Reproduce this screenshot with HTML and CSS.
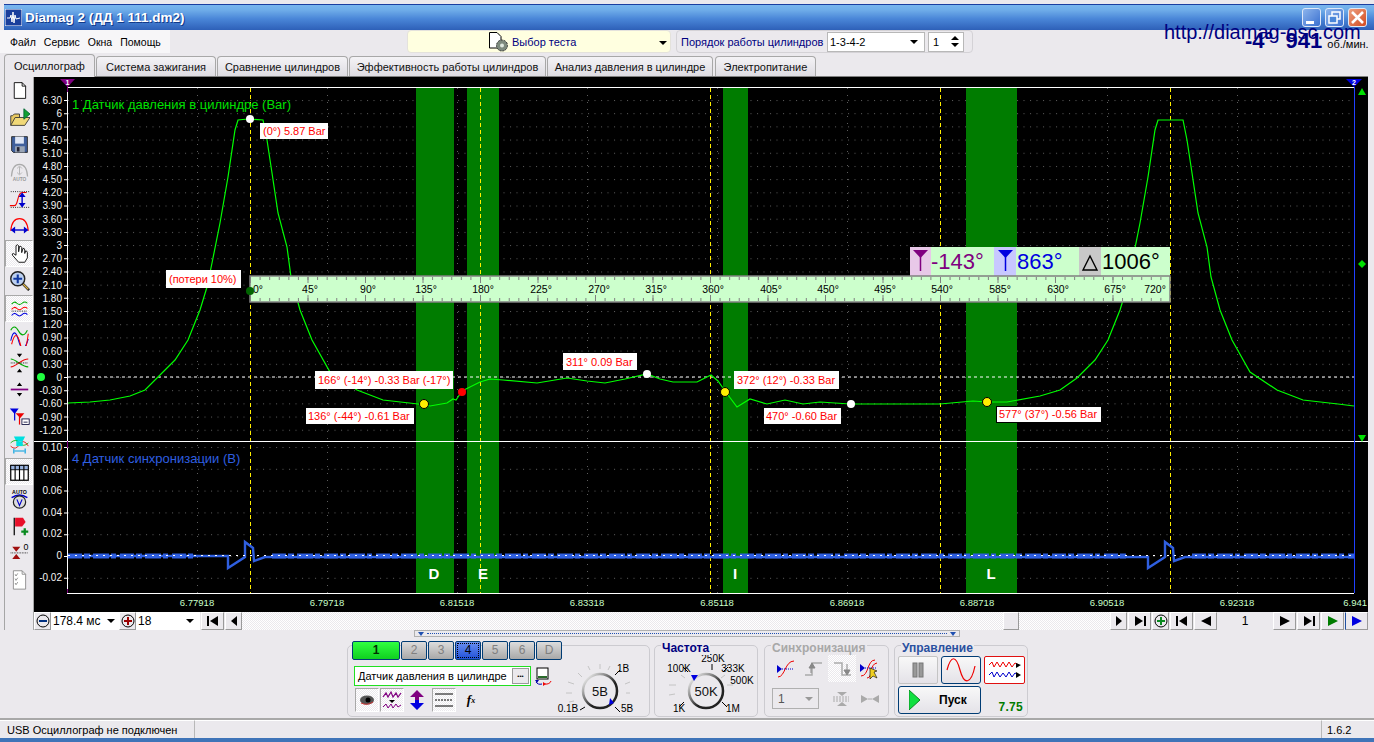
FILE: index.html
```html
<!DOCTYPE html>
<html lang="ru">
<head>
    <meta charset="UTF-8">
    <title>Diamag 2</title>
    <link rel="stylesheet" href="styles.css">
</head>
<body>
<div class="window">

    <!-- Title bar -->
    <div class="titlebar">
        <svg class="app-icon" width="17" height="17" viewBox="0 0 17 17"><rect width="17" height="17" fill="#1a3f9c" stroke="#fff"/><polyline points="2,9 5,9 6,6 7,13 8,3 9,14 10,6 11,10 15,9" fill="none" stroke="#fff"/></svg>
        <span class="app-title">Diamag 2 (ДД 1 111.dm2)</span>
        <div class="win-buttons">
            <div class="win-btn"><svg width="19" height="19" viewBox="0 0 19 19"><rect x="4" y="13" width="8" height="3" fill="#fff"/></svg></div>
            <div class="win-btn"><svg width="19" height="19" viewBox="0 0 19 19"><rect x="7" y="4" width="8" height="7" fill="none" stroke="#fff" stroke-width="1.5"/><rect x="4" y="8" width="8" height="7" fill="#4a86d8" stroke="#fff" stroke-width="1.5"/></svg></div>
            <div class="win-btn win-close"><svg width="19" height="19" viewBox="0 0 19 19"><path d="M4 4 L15 15 M15 4 L4 15" stroke="#fff" stroke-width="2.6"/></svg></div>
        </div>
    </div>

    <!-- Menu + test selector -->
    <div class="menu-row">
        <div class="menu">
            <span>Файл</span><span>Сервис</span><span>Окна</span><span>Помощь</span>
        </div>
        <div class="test-select">
            <svg width="22" height="22" viewBox="0 0 22 22"><path d="M1.5 1.5 H9 L13 5.5 V17 H1.5 Z" fill="#fff" stroke="#000"/><circle cx="14" cy="14.5" r="5.5" fill="#7d8a7d" stroke="#333" stroke-dasharray="2 1"/><circle cx="14" cy="14.5" r="2" fill="#dfe8df"/></svg>
            <span>Выбор теста</span>
            <i class="caret test-caret"></i>
        </div>
        <div class="order-box">
            <span class="order-label">Порядок работы цилиндров</span>
            <div class="order-select">1-3-4-2<i class="caret"></i></div>
            <div class="order-spin">1
                <div class="spin-arrows"><i class="arrow-up"></i><i class="caret"></i></div>
            </div>
        </div>
    </div>

    <div class="site-url">http://diamag-osc.com</div>
    <div class="rpm"><b>-4°&nbsp; 941</b><span>об./мин.</span></div>

    <!-- Tabs -->
    <div class="tabs">
        <div class="tab active">Осциллограф</div>
        <div class="tab t-ign">Система зажигания</div>
        <div class="tab t-cmp">Сравнение цилиндров</div>
        <div class="tab t-eff">Эффективность работы цилиндров</div>
        <div class="tab t-pre">Анализ давления в цилиндре</div>
        <div class="tab t-pow">Электропитание</div>
    </div>

    <div class="workspace">
        <!-- Left tool column -->
        <div class="toolbar">
            <div class="tool"><svg width="24" height="24" viewBox="0 0 24 24"><path d="M6 3 H15 L19 7 V21 H6 Z" fill="#fff" stroke="#000"/><path d="M15 3 V7 H19" fill="none" stroke="#000"/></svg></div>
            <div class="tool"><svg width="24" height="24" viewBox="0 0 24 24"><path d="M2 21 V10 H4 L6 8 H12 V12" fill="#e8c860" stroke="#333"/><path d="M2 21 L7 12 H24 L18 21 Z" fill="#f0d878" stroke="#333"/><path d="M17 2 L24 8 L17 14 Z" fill="#10a030" stroke="#063"/></svg></div>
            <div class="tool"><svg width="24" height="24" viewBox="0 0 24 24"><path d="M3 3 H21 V21 H5 L3 19 Z" fill="#3f5f9c" stroke="#222"/><rect x="7" y="3" width="10" height="8" fill="#dfe6f5"/><rect x="7" y="14" width="11" height="7" fill="#9aa5b5"/><rect x="9" y="15" width="3" height="5" fill="#223"/></svg></div>
            <div class="tool"><svg width="24" height="24" viewBox="0 0 26 24"><path d="M3 17 Q4 2 13 2 Q22 2 23 17" fill="none" stroke="#aaa" stroke-width="1.5"/><path d="M13 5 V14 M10 7 L13 4 L16 7 M10 12 L13 15 L16 12" fill="none" stroke="#aaa"/><text x="13" y="23" class="auto-txt auto-gray">AUTO</text></svg></div>
            <div class="tool"><svg width="24" height="24" viewBox="0 0 24 24"><path d="M1 19 H6 C11 19 9 4 15 4 H20" fill="none" stroke="#f00200" stroke-width="1.3"/><path d="M2 3 H24 M2 21 H24" stroke="#000" stroke-dasharray="1 1.5"/><path d="M15 5 V20" stroke="#00c" stroke-width="1.6"/><path d="M11 9 L15 4 L19 9 Z M11 16 L15 21 L19 16 Z" fill="#00c"/></svg></div>
            <div class="tool"><svg width="24" height="24" viewBox="0 0 24 24"><path d="M2 17 C3 5 8 3 12 3 C16 3 21 5 22 17" fill="none" stroke="#f00" stroke-width="1.3"/><path d="M3 16 H21" stroke="#00c" stroke-width="1.6"/><path d="M7 12 L2 16 L7 20 Z M17 12 L22 16 L17 20 Z" fill="#00c"/></svg></div>
            <div class="tool tool-on"><svg width="24" height="24" viewBox="0 0 24 24"><path d="M11 22 L4 14 Q3 12 5 12 L8 14 V3 Q10 1 11 3 V10 L12 4 Q14 3 14.5 5 V11 L16 6 Q18 6 18 8 V12 L19 9 Q21 9 21 11 V17 L18 22 Z" fill="#fff" stroke="#000"/></svg></div>
            <div class="tool"><svg width="24" height="24" viewBox="0 0 24 24"><path d="M15 15 L23 23" stroke="#222" stroke-width="3"/><path d="M16 16 L22 22" stroke="#d8b040" stroke-width="1.4"/><circle cx="10" cy="10" r="8" fill="#bcd0f0" stroke="#222" stroke-width="1.6"/><path d="M10 5 V15 M5 10 H15" stroke="#1038a0" stroke-width="2.4"/></svg></div>
            <div class="tool tool-on"><svg width="24" height="24" viewBox="0 0 24 24"><path d="M3 7 Q6 3 9 6 T15 6 T21 6" fill="none" stroke="#0a0" stroke-width="1.2"/><path d="M3 13 Q6 9 9 12 T15 12 T21 12" fill="none" stroke="#f00" stroke-width="1.2"/><path d="M3 20 Q6 16 9 19 T15 19 T21 19" fill="none" stroke="#00d" stroke-width="1.2"/><path d="M3 15 H21" stroke="#000" stroke-dasharray="1 1"/></svg></div>
            <div class="tool"><svg width="24" height="24" viewBox="0 0 24 24"><path d="M2 6 Q6 -2 11 7 T21 6" fill="none" stroke="#0a0" stroke-width="1.2"/><path d="M2 18 Q6 0 11 18 T22 16" fill="none" stroke="#00d" stroke-width="1.2"/><path d="M3 22 Q8 2 13 22 T22 10" fill="none" stroke="#f00" stroke-width="1.2"/></svg></div>
            <div class="tool"><svg width="24" height="24" viewBox="0 0 24 24"><path d="M2 8 C8 8 14 17 22 17" fill="none" stroke="#0a0" stroke-width="1.2"/><path d="M2 17 C8 17 14 8 22 8" fill="none" stroke="#e00" stroke-width="1.2"/><path d="M2 12.5 H22" stroke="#000" stroke-dasharray="1 1"/><path d="M9 2 H15 L12 6 Z M9 23 H15 L12 19 Z" fill="#000"/></svg></div>
            <div class="tool"><svg width="24" height="24" viewBox="0 0 24 24"><path d="M2 12 H22" stroke="#800080" stroke-width="2"/><path d="M9 8 L12 4 L15 8 Z M9 16 L12 20 L15 16 Z" fill="#000"/></svg></div>
            <div class="tool"><svg width="24" height="24" viewBox="0 0 26 24"><path d="M1 2 H12 L7 9 Z" fill="#00d"/><path d="M7 3 V17" stroke="#00d" stroke-width="1.5"/><path d="M8 8 H19 L14 14 Z" fill="#e00"/><path d="M13 9 V22" stroke="#e00" stroke-width="1.5"/><rect x="16" y="15" width="9" height="7" fill="#fff" stroke="#003"/><path d="M18 19 H23" stroke="#003"/></svg></div>
            <div class="tool"><svg width="24" height="24" viewBox="0 0 26 24"><path d="M6 2 H20 L17 8 H9 Z" fill="#00e0e0"/><path d="M2 10 Q8 4 13 10 T24 10" fill="none" stroke="#0a0"/><path d="M2 14 Q8 20 13 12 T24 14" fill="none" stroke="#e00"/><rect x="9" y="8" width="8" height="6" fill="#00e0e0"/><path d="M6 17 V23 M20 17 V23 M7 20 H19" stroke="#00a0e0" stroke-width="1.4"/></svg></div>
            <div class="tool tool-on"><svg width="24" height="24" viewBox="0 0 24 24"><rect x="2" y="5" width="20" height="17" fill="#fff" stroke="#000" stroke-width="1.4"/><rect x="2" y="5" width="20" height="5" fill="#9ab4e0" stroke="#000"/><path d="M7 5 V22 M12 5 V22 M17 5 V22" stroke="#000" stroke-width="1.3"/></svg></div>
            <div class="tool"><svg width="24" height="24" viewBox="0 0 24 24"><text x="12" y="7" class="auto-txt">AUTO</text><path d="M3 11 Q12 5 21 11" fill="none" stroke="#00c" stroke-width="1.5"/><circle cx="12" cy="16" r="7" fill="#ddd" stroke="#222" stroke-width="1.4"/><path d="M9 13 L12 20 L15 13" fill="none" stroke="#00c" stroke-width="1.3"/></svg></div>
            <div class="tool"><svg width="24" height="24" viewBox="0 0 24 24"><path d="M6 3 V23" stroke="#000" stroke-width="1.4"/><path d="M7 3 L16 3 L19 8 L15 13 L7 13 Z" fill="#e8102a"/><path d="M14 19 H22 M18 15 V23" stroke="#0a8a20" stroke-width="2.6"/></svg></div>
            <div class="tool"><svg width="24" height="24" viewBox="0 0 26 24"><path d="M4 5 H14 L9 11 Z M4 20 H14 L9 14 Z" fill="#a01010"/><path d="M2 12.5 H24" stroke="#000" stroke-dasharray="1 1"/><text x="21" y="9" class="zero-txt">0</text></svg></div>
            <div class="tool"><svg width="24" height="24" viewBox="0 0 24 24"><path d="M5 2 H15 L19 6 V23 H5 Z" fill="#fff" stroke="#888"/><path d="M7 6 L8 8 L10 5 M7 11 L8 13 L10 10 M7 16 L8 18 L10 15" fill="none" stroke="#888"/><path d="M15 2 V6 H19" fill="none" stroke="#888"/></svg></div>
        </div>

        <div class="scope-col">
            <!-- Scope canvas, coordinates are screen pixels -->
            <svg class="scope" width="1334" height="535" viewBox="34 77 1334 535">
                <defs>
                    <pattern id="dots-top" x="68" y="100" width="6.5" height="13.19" patternUnits="userSpaceOnUse"><rect width="1" height="1" fill="#5c5c5c"/></pattern>
                    <pattern id="dots-bot" x="68" y="447" width="6.5" height="21.8" patternUnits="userSpaceOnUse"><rect width="1" height="1" fill="#5c5c5c"/></pattern>
                </defs>

                <!-- grid -->
                <rect x="68" y="99" width="1286" height="340" fill="url(#dots-top)"/>
                <rect x="68" y="446" width="1286" height="146" fill="url(#dots-bot)"/>
                <path class="vgrid" d="M197.5 88V593M327.5 88V593M457.5 88V593M587.5 88V593M717.5 88V593M847.5 88V593M977.5 88V593M1107.5 88V593M1237.5 88V593"/>

                <!-- cylinder phase bands -->
                <rect x="416" y="88" width="38" height="505" fill="#007c00"/>
                <rect x="467" y="88" width="32" height="505" fill="#007c00"/>
                <rect x="723" y="88" width="25" height="505" fill="#007c00"/>
                <rect x="966" y="88" width="51" height="505" fill="#007c00"/>

                <line class="zero" x1="68" y1="377" x2="1354" y2="377"/>

                <!-- TDC markers -->
                <path class="tdc" d="M250.5 88V593M480.5 88V593M710.5 88V593M940.5 88V593M1170.5 88V593"/>

                <!-- frame -->
                <path class="frame" d="M67 87.5H1354M34 441.5H1368M67 593.5H1354M67.5 87V593"/>
                <line x1="65.5" y1="100" x2="65.5" y2="431" class="ytick"/>
                <line x1="65.5" y1="447" x2="65.5" y2="580" class="ytick-low"/>
                <line x1="1354.5" y1="87" x2="1354.5" y2="593" stroke="#2040ff"/>
                <path d="M67.5 80V92M67.5 441V448M67.5 589V593" stroke="#800080"/>
                <path d="M60 79H75L67.5 87Z" fill="#800080"/>
                <text x="67.5" y="85" class="mark-no">1</text>
                <path d="M1346 79H1362L1354 87Z" fill="#0000e0"/>
                <text x="1354" y="85" class="mark-no">2</text>
                <path d="M1358 95L1362 88L1366 95Z" fill="#00e000"/>
                <path d="M1362 260L1366 264L1362 268L1358 264Z" fill="#00e000"/>
                <path d="M1358 435L1362 442L1366 435Z" fill="#00e000"/>
                <circle cx="41" cy="377" r="4" fill="#20ff40"/>

                <!-- axis labels -->
                <g class="ylabels">
                    <text x="62" y="104">6.30</text><text x="62" y="117">6</text><text x="62" y="130">5.70</text>
                    <text x="62" y="144">5.40</text><text x="62" y="157">5.10</text><text x="62" y="170">4.80</text>
                    <text x="62" y="183">4.50</text><text x="62" y="196">4.20</text><text x="62" y="209">3.90</text>
                    <text x="62" y="223">3.60</text><text x="62" y="236">3.30</text><text x="62" y="249">3</text>
                    <text x="62" y="262">2.70</text><text x="62" y="275">2.40</text><text x="62" y="289">2.10</text>
                    <text x="62" y="302">1.80</text><text x="62" y="315">1.50</text><text x="62" y="328">1.20</text>
                    <text x="62" y="341">0.90</text><text x="62" y="355">0.60</text><text x="62" y="368">0.30</text>
                    <text x="62" y="381">0</text><text x="62" y="394">-0.30</text><text x="62" y="407">-0.60</text>
                    <text x="62" y="421">-0.90</text><text x="62" y="434">-1.20</text>
                    <text x="62" y="451">0.10</text><text x="62" y="473">0.08</text><text x="62" y="494">0.06</text>
                    <text x="62" y="516">0.04</text><text x="62" y="537">0.02</text><text x="62" y="559">0</text>
                    <text x="62" y="581">-0.02</text>
                </g>
                <g class="xlabels">
                    <text x="197" y="606">6.77918</text><text x="327" y="606">6.79718</text><text x="457" y="606">6.81518</text>
                    <text x="587" y="606">6.83318</text><text x="717" y="606">6.85118</text><text x="847" y="606">6.86918</text>
                    <text x="977" y="606">6.88718</text><text x="1107" y="606">6.90518</text><text x="1237" y="606">6.92318</text>
                    <text x="1367" y="606" class="x-last">6.941</text>
                </g>
                <text x="72" y="109" class="ch-name ch-green">1 Датчик давления в цилиндре (Bar)</text>
                <text x="72" y="463" class="ch-name ch-blue">4 Датчик синхронизации (В)</text>

                <g class="band-names">
                    <text x="434" y="579">D</text><text x="483" y="579">E</text><text x="735" y="579">I</text><text x="991" y="579">L</text>
                </g>

                <!-- sync signal -->
                <path class="sync" d="M68 556H228V568L245 557V542L253 548L254 561L265 557H1148V568L1165 557V542L1173 548L1174 561L1185 557H1354"/>
                <path class="sync-noise" d="M68 556H193M272 556H1128M1192 556H1354"/>
                <line class="zero zero-sync" x1="68" y1="555.5" x2="1354" y2="555.5"/>

                <!-- pressure trace -->
                <polyline class="trace" points="68,403 90,402 110,400 130,396 145,390 158,377 175,360 188,340 200,310 207,287 212,263 220,223 228,177 235,130 238,120 248,119 263,120 267,140 272,173 278,213 287,247 291,277 300,310 312,340 330,372 357,390 383,400 418,404 430,406 447,403 453,399 456,400 462,391 468,388 480,382 490,379 503,380 537,383 567,378 587,381 605,383 625,379 647,374 660,379 673,382 697,382 711,375 718,381 725,391 737,407 750,399 767,404 785,400 803,404 820,402 850,404 940,404 973,401 987,402 1007,402 1040,396 1060,390 1077,378 1095,360 1108,340 1120,310 1127,287 1132,263 1140,223 1148,177 1155,130 1158,120 1180,120 1183,120 1187,140 1192,173 1198,213 1207,247 1211,277 1220,310 1232,340 1250,372 1277,390 1303,400 1338,404 1354,406"/>

                <!-- angle ruler -->
                <rect x="910" y="247" width="260" height="29" fill="#ccffcc"/>
                <rect x="910" y="247" width="21" height="29" fill="#e8c8e8"/>
                <rect x="994" y="247" width="22" height="29" fill="#c8c8ff"/>
                <rect x="1079" y="247" width="22" height="29" fill="#c8c8c8"/>
                <path d="M913 250H928L920.5 258Z" fill="#800080"/><path d="M920.5 252V271" stroke="#800080" stroke-width="1.5"/>
                <path d="M998 250H1013L1005.5 258Z" fill="#0000e0"/><path d="M1005.5 252V271" stroke="#0000e0" stroke-width="1.5"/>
                <path d="M1083 270H1097L1090 256Z" fill="none" stroke="#000" stroke-width="1.4"/>
                <text x="931" y="269" class="delta delta-a">-143°</text>
                <text x="1017" y="269" class="delta delta-b">863°</text>
                <text x="1102" y="269" class="delta">1006°</text>
                <rect x="250" y="276" width="920" height="26" fill="#ccffcc" stroke="#808080" stroke-width="1.5"/>
                <path class="rule-minor" d="M250 278.5H1170M250 299.5H1170"/>
                <path class="rule-major" d="M250 280H1170M250 298H1170"/>
                <g class="rule-labels">
                    <text x="258" y="293">0°</text><text x="310" y="293">45°</text><text x="368" y="293">90°</text>
                    <text x="426" y="293">135°</text><text x="483" y="293">180°</text><text x="541" y="293">225°</text>
                    <text x="599" y="293">270°</text><text x="656" y="293">315°</text><text x="713" y="293">360°</text>
                    <text x="771" y="293">405°</text><text x="828" y="293">450°</text><text x="885" y="293">495°</text>
                    <text x="942" y="293">540°</text><text x="1000" y="293">585°</text><text x="1058" y="293">630°</text>
                    <text x="1115" y="293">675°</text><text x="1155" y="293">720°</text>
                </g>

                <!-- measurement points -->
                <circle cx="250" cy="119" r="4" fill="#fff"/>
                <circle cx="250" cy="291" r="4" fill="#006400"/>
                <circle cx="424" cy="404" r="4.5" fill="#ffee00" stroke="#000"/>
                <circle cx="462" cy="392" r="4" fill="#f00"/>
                <circle cx="647" cy="374" r="4" fill="#fff"/>
                <circle cx="725" cy="392" r="4.5" fill="#ffee00" stroke="#000"/>
                <circle cx="851" cy="404" r="4" fill="#fff"/>
                <circle cx="987" cy="402" r="4.5" fill="#ffee00" stroke="#000"/>

                <!-- callouts -->
                <g class="callouts">
                    <rect x="260" y="123" width="68" height="16"/><text x="263" y="135">(0°) 5.87 Bar</text>
                    <rect x="166" y="270" width="75" height="18"/><text x="169" y="283">(потери 10%)</text>
                    <rect x="315" y="371" width="138" height="18"/><text x="318" y="384">166° (-14°) -0.33 Bar (-17°)</text>
                    <rect x="306" y="408" width="108" height="16"/><text x="308" y="420">136° (-44°) -0.61 Bar</text>
                    <rect x="563" y="353" width="74" height="17"/><text x="566" y="366">311° 0.09 Bar</text>
                    <rect x="734" y="371" width="105" height="18"/><text x="737" y="384">372° (12°) -0.33 Bar</text>
                    <rect x="764" y="408" width="77" height="16"/><text x="766" y="420">470° -0.60 Bar</text>
                    <rect x="996.5" y="406.5" width="105" height="16" stroke="#000"/><text x="999" y="418">577° (37°) -0.56 Bar</text>
                </g>
            </svg>

            <!-- Time scale row -->
            <div class="scale-row">
                <div class="nav-btn btn-round"><svg width="14" height="14" viewBox="0 0 14 14"><circle cx="7" cy="7" r="6" fill="none" stroke="#000"/><path d="M3 7H11" stroke="#003080" stroke-width="2"/></svg></div>
                <div class="scale-box box-time">178.4 мс<i class="caret"></i></div>
                <div class="nav-btn btn-round"><svg width="14" height="14" viewBox="0 0 14 14"><circle cx="7" cy="7" r="6" fill="none" stroke="#000"/><path d="M3 7H11M7 3V11" stroke="#900" stroke-width="2"/></svg></div>
                <div class="scale-box box-num">18<i class="caret"></i></div>
                <div class="nav-btn btn-wide"><svg width="12" height="10" viewBox="0 0 12 10"><path d="M1 0V10" stroke="#000" stroke-width="2"/><path d="M11 0V10L3 5Z"/></svg></div>
                <div class="nav-btn"><svg width="6" height="10" viewBox="0 0 6 10"><path d="M6 0V10L0 5Z"/></svg></div>
                <div class="track"><div class="thumb"></div></div>
                <div class="nav-btn"><svg width="6" height="10" viewBox="0 0 6 10"><path d="M0 0V10L6 5Z"/></svg></div>
                <div class="nav-btn btn-wide"><svg width="12" height="10" viewBox="0 0 12 10"><path d="M1 0V10L9 5Z"/><path d="M11 0V10" stroke="#000" stroke-width="2"/></svg></div>
                <div class="nav-btn btn-round"><svg width="14" height="14" viewBox="0 0 14 14"><circle cx="7" cy="7" r="6" fill="none" stroke="#000"/><path d="M3 7H11M7 3V11" stroke="#0a8a20" stroke-width="2"/></svg></div>
                <div class="nav-btn btn-wide"><svg width="12" height="10" viewBox="0 0 12 10"><path d="M1 0V10" stroke="#000" stroke-width="2"/><path d="M11 0V10L3 5Z"/></svg></div>
                <div class="nav-btn btn-wide"><svg width="10" height="10" viewBox="0 0 10 10"><path d="M10 0V10L0 5Z"/></svg></div>
                <div class="frame-no">1</div>
                <div class="nav-btn btn-wide"><svg width="10" height="10" viewBox="0 0 10 10"><path d="M0 0V10L10 5Z"/></svg></div>
                <div class="nav-btn btn-wide"><svg width="12" height="10" viewBox="0 0 12 10"><path d="M1 0V10L9 5Z"/><path d="M11 0V10" stroke="#000" stroke-width="2"/></svg></div>
                <div class="nav-btn btn-wide"><svg width="10" height="10" viewBox="0 0 10 10"><path d="M0 0V10L10 5Z" fill="#007c00"/></svg></div>
                <div class="nav-btn btn-wide btn-last"><svg width="10" height="10" viewBox="0 0 10 10"><path d="M0 0V10L10 5Z" fill="#0000e0"/></svg></div>
            </div>
        </div>
    </div>

    <!-- Range slider -->
    <div class="range-bar"><i class="range-l"></i><div class="range-dots"></div><i class="range-r"></i></div>

    <!-- Control panels -->
    <div class="panels">
        <div class="panel panel-ch">
            <div class="channels">
                <div class="ch ch-1">1</div><div class="ch">2</div><div class="ch">3</div><div class="ch ch-4">4</div><div class="ch">5</div><div class="ch">6</div><div class="ch">D</div>
            </div>
            <div class="ch-body">
                <div class="ch-left">
                    <div class="ch-top">
                        <div class="ch-input">Датчик давления в цилиндре<span class="dots-btn">•••</span></div>
                        <svg width="18" height="19" viewBox="0 0 18 19"><rect x="2" y="1" width="11" height="11" fill="#fff" stroke="#000"/><rect x="3" y="9" width="9" height="2" fill="#2a6a2a"/><path d="M1 15 A5 4 0 0 0 7 17" fill="none" stroke="#00a"/><path d="M16 14 A5 4 0 0 1 10 17" fill="none" stroke="#e00"/><path d="M0 13H4L2 16Z" fill="#00a"/><path d="M8 15V19L11 17Z" fill="#e00"/></svg>
                    </div>
                    <div class="ch-tools">
                        <div class="ch-tool tool-on"><svg width="16" height="12" viewBox="0 0 16 12"><ellipse cx="8" cy="6" rx="7" ry="4.5" fill="#555"/><circle cx="9" cy="6" r="2.5" fill="#000"/><path d="M2 9Q8 12 14 8" fill="none" stroke="#c33"/></svg></div>
                        <div class="ch-tool tool-on"><svg width="20" height="20" viewBox="0 0 20 20"><path d="M1 7L4 3L6 7L9 2L11 7L14 3L16 7L19 3" fill="none" stroke="#800080" stroke-width="1.2"/><path d="M7 10H13L10 13Z"/><path d="M1 17L4 14L6 18L9 14L11 18L14 14L16 17L19 15" fill="none" stroke="#800080"/></svg></div>
                        <div class="ch-tool ch-plain"><svg width="16" height="22" viewBox="0 0 16 22"><path d="M8 1L15 8H10V11H6V8H1Z" fill="#800080"/><path d="M8 21L15 14H10V11H6V14H1Z" fill="#0000e0"/></svg></div>
                        <div class="ch-tool tool-on"><svg width="20" height="18" viewBox="0 0 20 18"><path d="M1 3H19M1 15H19" stroke="#000"/><path d="M1 9H19" stroke="#000" stroke-dasharray="2 1"/></svg></div>
                        <div class="ch-tool ch-plain ch-fx"><i>f</i><sub>x</sub></div>
                    </div>
                </div>
                <svg class="knob knob-volt" width="80" height="58" viewBox="0 0 80 58">
                    <path class="knob-ticks" d="M40 4V9M28 6L30 10M50 6L48 10M18 13L22 17M8 22L14 24M6 33H12M9 42L14 41M70 33H66M70 22L65 24"/>
                    <circle cx="40" cy="31" r="17" fill="#ebe9ed" stroke="url(#knob-ring)" stroke-width="2.5"/>
                    <text x="40" y="36" class="knob-val">5В</text>
                    <path d="M55 15L60 10M55 47L60 52M25 47L20 50" stroke="#000"/>
                    <path d="M54 43L50 38L49 45Z" fill="#0000e0"/>
                    <text x="63" y="12" class="knob-lbl">1В</text>
                    <text x="8" y="52" class="knob-lbl">0.1В</text>
                    <text x="67" y="52" class="knob-lbl">5В</text>
                    <defs><linearGradient id="knob-ring" x1="0" y1="0" x2="1" y2="1"><stop offset="0.1" stop-color="#e8e8e8"/><stop offset="0.6" stop-color="#222"/></linearGradient></defs>
                </svg>
            </div>
        </div>

        <div class="panel panel-freq">
            <div class="panel-title">Частота</div>
            <svg class="knob" width="104" height="68" viewBox="0 0 104 68">
                <path class="knob-ticks" d="M26 25L30 28M14 35H21M14 45L20 44M72 35H78M70 25L66 28"/>
                <path d="M28 17L33 22M57 14V20M73 17L68 22M29 52L24 57M67 52L72 57" stroke="#000"/>
                <circle cx="51" cy="41" r="17" fill="#ebe9ed" stroke="url(#knob-ring)" stroke-width="2.5"/>
                <text x="51" y="46" class="knob-val">50K</text>
                <path d="M36 25L43 25L39 31Z" fill="#0000e0"/>
                <text x="58" y="12" class="knob-lbl">250K</text>
                <text x="24" y="22" class="knob-lbl">100K</text>
                <text x="78" y="22" class="knob-lbl">333K</text>
                <text x="87" y="34" class="knob-lbl">500K</text>
                <text x="24" y="62" class="knob-lbl">1K</text>
                <text x="78" y="62" class="knob-lbl">1M</text>
            </svg>
        </div>

        <div class="panel panel-sync">
            <div class="panel-title title-off">Синхронизация</div>
            <div class="sync-grid">
                <div class="sync-cell"><svg width="20" height="20" viewBox="0 0 20 20"><path d="M2 18C9 18 9 2 18 2" fill="none" stroke="#e00"/><path d="M2 10H18" stroke="#00c" stroke-dasharray="1 1"/><path d="M1 6V14L6 10Z" fill="#00c"/></svg></div>
                <div class="sync-cell"><svg width="20" height="20" viewBox="0 0 20 20"><path d="M1 16H8V4H18" fill="none" stroke="#aaa" stroke-width="1.5"/><path d="M5 9H11L8 4ZM7 9V14" fill="#888" stroke="#888"/></svg></div>
                <div class="sync-cell tool-on"><svg width="20" height="20" viewBox="0 0 20 20"><path d="M2 4H10V16H19" fill="none" stroke="#aaa" stroke-width="1.5"/><path d="M12 11H18L15 16ZM15 5V12" fill="#888" stroke="#888"/></svg></div>
                <div class="sync-cell"><svg width="22" height="22" viewBox="0 0 22 22"><path d="M2 18C10 18 8 2 16 2" fill="none" stroke="#e00"/><path d="M8 20C14 20 10 6 18 5" fill="none" stroke="#e00"/><path d="M2 10H18" stroke="#00c" stroke-dasharray="1 1"/><path d="M1 6V14L6 10Z" fill="#00c"/><path d="M11 10L11 21L14 18L18 20L15 14L18 13Z" fill="#f0d020" stroke="#000" stroke-width="0.6"/></svg></div>
                <div class="sync-select">1<i class="caret caret-off"></i></div>
                <div class="sync-cell"><svg width="20" height="20" viewBox="0 0 20 20"><path d="M5 3H15L10 7ZM5 17H15L10 13Z" fill="#aaa"/><path d="M1 8H17M1 10H17M1 12H17" stroke="#aaa" stroke-dasharray="2 1"/></svg></div>
                <div class="sync-cell"><svg width="20" height="20" viewBox="0 0 20 20"><path d="M1 6V14L8 10ZM19 6V14L12 10Z" fill="#aaa"/><path d="M8 10H12" stroke="#aaa"/></svg></div>
            </div>
        </div>

        <div class="panel panel-ctrl">
            <div class="panel-title title-ctrl">Управление</div>
            <div class="ctrl-grid">
                <div class="ctrl-btn btn-pause"><svg width="14" height="16" viewBox="0 0 14 16"><rect x="2" y="1" width="4" height="14" fill="#999" stroke="#777"/><rect x="8" y="1" width="4" height="14" fill="#999" stroke="#777"/></svg></div>
                <div class="ctrl-btn btn-sine"><svg width="32" height="24" viewBox="0 0 32 24"><path d="M2 12C6 -3 11 -3 15 12S26 27 30 8" fill="none" stroke="#e00" stroke-width="1.2"/></svg></div>
                <div class="ctrl-btn btn-multi"><svg width="34" height="22" viewBox="0 0 34 22"><path d="M1 6L4 3L6 8L9 3L12 8L15 3L18 8L21 3L24 8L27 4L31 6" fill="none" stroke="#e00"/><path d="M28 4V9L33 6Z" fill="#000"/><path d="M1 16L4 13L6 18L9 13L12 18L15 14L18 18L21 13L24 18L27 14L31 16" fill="none" stroke="#00c"/><path d="M28 13V19L33 16Z" fill="#000"/></svg></div>
                <div class="ctrl-btn btn-start"><svg width="11" height="20" viewBox="0 0 11 20"><path d="M0 0V20L11 10Z" fill="#10e040" stroke="#0a8a20"/></svg><span>Пуск</span></div>
                <div class="speed">7.75</div>
            </div>
        </div>
    </div>

    <!-- Status bar -->
    <div class="statusbar">
        <div class="st-cell st-main">USB Осциллограф не подключен</div>
        <div class="st-cell st-mid"></div>
        <div class="st-cell st-ver">1.6.2</div>
    </div>
</div>
</body>
</html>
```
FILE: styles.css
```css
/* Basic Reset */
* {
    margin: 0;
    padding: 0;
    box-sizing: border-box;
}
html, body {
    width: 1374px;
    height: 742px;
    overflow: hidden;
}
body {
    font-family: 'Liberation Sans', Arial, sans-serif;
    font-size: 11px;
    background-color: #fff;
    color: #000;
}
.window {
    position: relative;
    width: 1374px;
    height: 742px;
    background-color: #ebe9ed;
    padding-top: 4px;
    border-bottom: 4px solid #3f74b8;
}

/* Title bar */
.titlebar {
    height: 26px;
    margin-left: 4px;
    display: flex;
    align-items: center;
    padding-left: 1px;
    border-top: 1px solid #1b3fa0;
    background: linear-gradient(#79b6ee 0, #6fade9 20%, #4a86d8 55%, #2e60b8 100%);
}
.app-icon {
    margin-right: 3px;
}
.app-title {
    color: #fff;
    font-size: 13.5px;
    font-weight: bold;
    text-shadow: 1px 1px 0 #123a8a;
}
.win-buttons {
    margin-left: auto;
    margin-right: 7px;
    display: flex;
    gap: 4px;
}
.win-btn {
    width: 19px;
    height: 19px;
    border: 1px solid #dfe8f8;
    border-radius: 3px;
    background: linear-gradient(135deg, #8cb4ec, #3a70d0);
    overflow: hidden;
}
.win-btn svg {
    display: block;
    margin: -1px;
}
.win-close {
    background: linear-gradient(135deg, #eea080, #d24a20);
}

/* Menu row */
.menu-row {
    height: 23px;
    display: flex;
    align-items: stretch;
}
.menu {
    width: 170px;
    background-color: #f7f6f8;
    display: flex;
    align-items: center;
    padding-left: 10px;
    gap: 8px;
    font-size: 10.5px;
}
.test-select {
    position: relative;
    width: 264px;
    margin-left: 237px;
    background-color: #ffffe0;
    border: 1px solid #e4e2dc;
    border-radius: 4px;
    display: flex;
    align-items: center;
    padding-left: 80px;
    color: #000080;
}
.test-select span {
    margin-left: 2px;
}
.test-caret {
    position: absolute;
    right: 3px;
    top: 10px;
}
.caret {
    display: inline-block;
    border-left: 4px solid transparent;
    border-right: 4px solid transparent;
    border-top: 4px solid #000;
}
.arrow-up {
    display: inline-block;
    border-left: 4px solid transparent;
    border-right: 4px solid transparent;
    border-bottom: 4px solid #000;
}
.order-box {
    width: 297px;
    margin-left: 5px;
    border: 1px solid #d4d2d6;
    border-radius: 4px;
    display: flex;
    align-items: center;
    padding-left: 4px;
}
.order-label {
    color: #000080;
    width: 146px;
    font-size: 11px;
}
.order-select {
    width: 98px;
    height: 20px;
    background-color: #fff;
    border: 1px solid #b8b8b8;
    display: flex;
    align-items: center;
    justify-content: space-between;
    padding: 0 6px 0 2px;
}
.order-spin {
    width: 36px;
    height: 20px;
    margin-left: 3px;
    background-color: #fff;
    border: 1px solid #b8b8b8;
    display: flex;
    align-items: center;
    justify-content: space-between;
    padding: 0 4px;
}
.spin-arrows {
    display: flex;
    flex-direction: column;
    gap: 3px;
}

/* Overlapping text top right */
.site-url {
    position: absolute;
    left: 1164px;
    top: 21px;
    color: #000080;
    font-size: 20px;
    line-height: 23px;
    white-space: nowrap;
}
.rpm {
    position: absolute;
    left: 1245px;
    top: 29px;
    display: flex;
    align-items: flex-end;
    color: #000080;
    white-space: nowrap;
}
.rpm b {
    font-size: 22px;
    line-height: 24px;
}
.rpm span {
    color: #000;
    font-size: 11px;
    line-height: 17px;
    margin-left: 5px;
}

/* Tabs */
.tabs {
    height: 23px;
    display: flex;
    align-items: flex-end;
    padding-left: 4px;
    gap: 1px;
}
.tab {
    height: 20px;
    display: flex;
    align-items: center;
    justify-content: center;
    border: 1px solid #a8a8a8;
    border-bottom: 0;
    border-radius: 4px 4px 0 0;
    background: linear-gradient(#f4f3f6, #dedce2);
    font-size: 11px;
    color: #111;
    width: 120px;
}
.tab.active {
    width: 91px;
    height: 23px;
    background: #ebe9ed;
    margin-bottom: -1px;
    position: relative;
}
.t-cmp { width: 131px; }
.t-eff { width: 197px; }
.t-pre { width: 166px; }
.t-pow { width: 101px; margin-left: 1px; }

/* Workspace */
.workspace {
    height: 554px;
    display: flex;
    padding-left: 4px;
}
.toolbar {
    width: 30px;
    border-left: 1px solid #a6a6a6;
    border-right: 1px solid #a6a6a6;
    display: flex;
    flex-direction: column;
    padding-top: 1px;
}
.tool {
    height: 27.2px;
    width: 28px;
    display: flex;
    align-items: center;
    justify-content: center;
}
.tool svg {
    width: 21px;
    height: 21px;
}
.tool-on {
    background: repeating-conic-gradient(#fff 0 25%, #ebe9ed 0 50%) 0 0 / 2px 2px;
    border: 1px solid;
    border-color: #a8a8a8 #fff #fff #a8a8a8;
}
.auto-txt {
    font-size: 6px;
    font-weight: bold;
    text-anchor: middle;
    fill: #000;
}
.auto-gray {
    fill: #999;
}
.zero-txt {
    font-size: 11px;
    text-anchor: middle;
    fill: #000;
}
.scope-col {
    width: 1334px;
    display: flex;
    flex-direction: column;
    border-top: 1px solid #808080;
}
.scope {
    display: block;
    background-color: #000;
}

/* Scope drawing */
.vgrid {
    stroke: #5c5c5c;
    stroke-dasharray: 1 6;
    fill: none;
}
.zero {
    stroke: #fff;
    stroke-dasharray: 3 3;
}
.zero-sync {
    stroke-dasharray: 2 5;
}
.tdc {
    stroke: #ffee00;
    stroke-dasharray: 4 3;
    fill: none;
}
.frame {
    stroke: #fff;
    fill: none;
}
.ytick {
    stroke: #fff;
    stroke-width: 3;
    stroke-dasharray: 1 12.19;
}
.ytick-low {
    stroke: #fff;
    stroke-width: 3;
    stroke-dasharray: 1 20.8;
}
.mark-no {
    fill: #fff;
    font-size: 7px;
    font-weight: bold;
    text-anchor: middle;
}
.ylabels text {
    fill: #f4f4f4;
    font-size: 10px;
    text-anchor: end;
}
.xlabels text {
    fill: #c8ffc8;
    font-size: 9.5px;
    text-anchor: middle;
}
.xlabels .x-last {
    text-anchor: end;
}
.ch-name {
    font-size: 13px;
}
.ch-green { fill: #00e000; }
.ch-blue { fill: #2f5fe0; }
.band-names text {
    fill: #fff;
    font-size: 15px;
    font-weight: bold;
    text-anchor: middle;
}
.sync {
    fill: none;
    stroke: #2f5fe0;
    stroke-width: 2.4;
}
.sync-noise {
    fill: none;
    stroke: #2f5fe0;
    stroke-width: 5;
    stroke-dasharray: 14 2 6 3 16 2 5 4;
}
.trace {
    fill: none;
    stroke: #00ff00;
    stroke-width: 1.2;
}
.delta {
    font-size: 22px;
    fill: #000;
}
.delta-a { fill: #800080; }
.delta-b { fill: #0000e0; }
.rule-minor {
    stroke: #808080;
    stroke-width: 3;
    stroke-dasharray: 1 8.583;
    fill: none;
}
.rule-major {
    stroke: #808080;
    stroke-width: 6;
    stroke-dasharray: 1 56.5;
    fill: none;
}
.rule-labels text {
    font-size: 10.5px;
    text-anchor: middle;
    fill: #000;
}
.callouts rect {
    fill: #fff;
}
.callouts text {
    fill: #f00;
    font-size: 11px;
}

/* Scale row under the scope */
.scale-row {
    height: 18px;
    display: flex;
    margin-top: 0;
}
.nav-btn {
    width: 17px;
    height: 18px;
    background-color: #ebe9ed;
    border: 1px solid;
    border-color: #fff #9a9a9a #9a9a9a #fff;
    display: flex;
    align-items: center;
    justify-content: center;
}
.nav-btn + .nav-btn {
    margin-left: 1px;
}
.btn-round {
    width: 17px;
}
.btn-wide {
    width: 23px;
}
.btn-last {
    border-left: 1px solid #2050a0;
}
.scale-box {
    background-color: #fff;
    display: flex;
    align-items: center;
    justify-content: space-between;
    font-size: 12px;
    padding: 0 4px 0 2px;
}
.box-time { width: 68px; }
.box-num { width: 64px; margin-right: 1px; padding-right: 6px; }
.track {
    position: relative;
    width: 868px;
    background: repeating-conic-gradient(#fff 0 25%, #ebe9ed 0 50%) 0 0 / 2px 2px;
}
.thumb {
    position: absolute;
    left: 761px;
    top: 0;
    width: 16px;
    height: 18px;
    background-color: #ebe9ed;
    border: 1px solid;
    border-color: #fff #9a9a9a #9a9a9a #fff;
}
.frame-no {
    width: 56px;
    text-align: center;
    font-size: 12px;
    line-height: 18px;
}

/* Range slider */
.range-bar {
    width: 546px;
    height: 7px;
    margin-left: 414px;
    border: 1px solid #b0b0b0;
    display: flex;
    align-items: center;
    padding: 0 3px;
    gap: 3px;
}
.range-dots {
    flex: 1;
    border-top: 1px dotted #2050b0;
}
.range-l, .range-r {
    border-left: 3px solid transparent;
    border-right: 3px solid transparent;
    border-top: 4px solid #2050b0;
}

/* Control panels */
.panels {
    display: flex;
    height: 72px;
    margin-top: 8px;
    margin-left: 347px;
}
.panel {
    position: relative;
    height: 72px;
    border: 1px solid #cccbd0;
    border-radius: 5px;
}
.panel-ch { width: 303px; }
.panel-freq { width: 104px; margin-left: 4px; }
.panel-sync { width: 125px; margin-left: 6px; }
.panel-ctrl { width: 134px; margin-left: 5px; }
.panel-title {
    position: absolute;
    left: 6px;
    top: -5px;
    padding: 0 1px;
    background-color: #ebe9ed;
    color: #000080;
    font-size: 12px;
    line-height: 14px;
    font-weight: bold;
}
.title-off { color: #a8a8a8; }
.title-ctrl { color: #2a50a0; }
.channels {
    display: flex;
    gap: 1px;
    margin: -5px 0 0 4px;
    height: 19px;
}
.ch {
    width: 26px;
    border: 1px solid #003c74;
    border-radius: 2px;
    background: linear-gradient(#dcdcdc, #a8a8a8);
    color: #808080;
    font-size: 12px;
    text-align: center;
    line-height: 17px;
}
.ch-1 {
    width: 48px;
    background: linear-gradient(#30ff40, #10d020);
    color: #003000;
    font-weight: bold;
}
.ch-4 {
    background: linear-gradient(#6a90f0, #2050d8);
    color: #000;
    outline: 1px dotted #000;
    outline-offset: -3px;
}
.ch-body {
    display: flex;
}
.ch-left {
    width: 212px;
    padding: 6px 0 0 6px;
}
.ch-top {
    display: flex;
    align-items: center;
    gap: 4px;
}
.ch-input {
    width: 177px;
    height: 20px;
    border: 1px solid #20e020;
    background-color: #fff;
    display: flex;
    align-items: center;
    justify-content: space-between;
    padding: 0 1px 0 3px;
    font-size: 11px;
    white-space: nowrap;
}
.dots-btn {
    width: 17px;
    height: 16px;
    border: 1px solid #9a9a9a;
    background-color: #ebe9ed;
    font-size: 6px;
    line-height: 14px;
    text-align: center;
}
.ch-tools {
    display: flex;
    align-items: center;
    margin-top: 2px;
    padding-left: 1px;
    gap: 1px;
}
.ch-tool {
    width: 24px;
    height: 24px;
    display: flex;
    align-items: center;
    justify-content: center;
}
.ch-plain {
    width: 24px;
    margin-right: 2px;
}
.ch-fx {
    font-family: 'Liberation Serif', serif;
    font-weight: bold;
    font-size: 13px;
    margin-left: 2px;
}
.ch-fx sub {
    font-size: 8px;
    font-style: italic;
}
.knob {
    display: block;
    overflow: visible;
}
.knob-ticks {
    stroke: #c4c4c4;
    fill: none;
}
.knob-val {
    font-size: 13px;
    text-anchor: middle;
    fill: #111;
}
.knob-lbl {
    font-size: 10px;
    text-anchor: middle;
    fill: #000;
}
.panel-freq .knob {
    margin-top: 4px;
}

/* Sync panel */
.sync-grid {
    display: grid;
    grid-template-columns: repeat(4, 28px);
    grid-auto-rows: 27px;
    padding: 9px 0 0 7px;
    row-gap: 3px;
}
.sync-cell {
    display: flex;
    align-items: center;
    justify-content: center;
}
.sync-cell.tool-on {
    border: 0;
}
.sync-select {
    grid-column: span 2;
    width: 47px;
    height: 21px;
    margin-top: 3px;
    border: 1px solid #b0b0b0;
    display: flex;
    align-items: center;
    justify-content: space-between;
    padding: 0 5px;
    font-size: 12px;
    color: #555;
}
.caret-off {
    border-top-color: #999;
}

/* Control panel */
.ctrl-grid {
    display: grid;
    grid-template-columns: 40px 40px 41px;
    grid-template-rows: 28px 28px;
    column-gap: 3px;
    row-gap: 2px;
    padding: 10px 0 0 3px;
}
.ctrl-btn {
    display: flex;
    align-items: center;
    justify-content: center;
    border-radius: 2px;
    background: linear-gradient(#f8f8f8, #e4e2e8);
}
.btn-pause {
    border: 1px solid #c4c4c4;
}
.btn-sine {
    border: 1px solid #003c74;
    border-radius: 3px;
}
.btn-multi {
    border: 1px solid #e01010;
    background: #fff;
}
.btn-start {
    grid-column: span 2;
    border: 1px solid #003c74;
    border-radius: 3px;
    justify-content: flex-start;
    padding-left: 10px;
    font-weight: bold;
    font-size: 12px;
}
.btn-start span {
    margin-left: 19px;
}
.speed {
    color: #007c00;
    font-size: 12px;
    font-weight: bold;
    align-self: end;
    text-align: right;
    padding-right: 2px;
    letter-spacing: 0.3px;
}

/* Status bar */
.statusbar {
    height: 20px;
    margin-top: 1px;
    border-top: 2px solid #a8a8a8;
    display: flex;
}
.st-cell {
    border-right: 1px solid #b8b8b8;
    border-top: 1px solid #fff;
    display: flex;
    align-items: center;
    padding-left: 3px;
}
.st-main { width: 195px; padding-left: 7px; }
.st-mid { width: 1127px; }
.st-ver { flex: 1; padding-left: 5px; border-right: 0; }
```
